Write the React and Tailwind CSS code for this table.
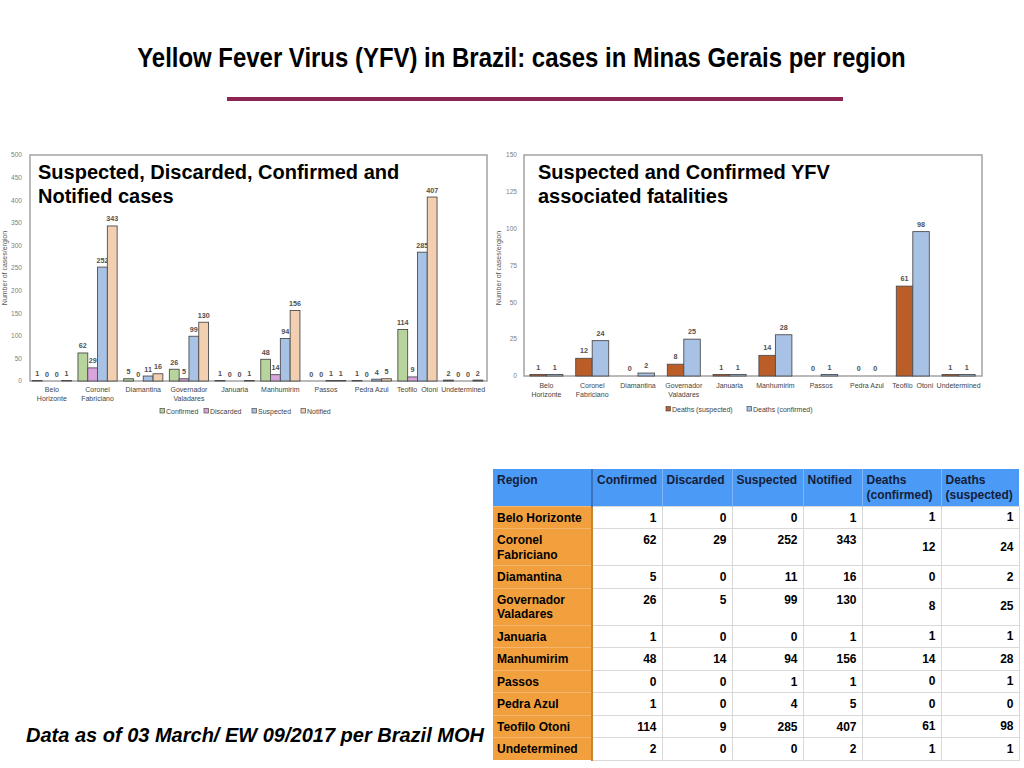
import React from "react";

const FONT = { fontFamily: '"Liberation Sans", Arial, Helvetica, sans-serif' };

const leftGroups = [
  { label: ["Belo", "Horizonte"], v: [1, 0, 0, 1] },
  { label: ["Coronel", "Fabriciano"], v: [62, 29, 252, 343] },
  { label: ["Diamantina"], v: [5, 0, 11, 16] },
  { label: ["Governador", "Valadares"], v: [26, 5, 99, 130] },
  { label: ["Januaria"], v: [1, 0, 0, 1] },
  { label: ["Manhumirim"], v: [48, 14, 94, 156] },
  { label: ["Passos"], v: [0, 0, 1, 1] },
  { label: ["Pedra Azul"], v: [1, 0, 4, 5] },
  { label: ["Teofilo  Otoni"], v: [114, 9, 285, 407] },
  { label: ["Undetermined"], v: [2, 0, 0, 2] },
];

const rightGroups = [
  { label: ["Belo", "Horizonte"], v: [1, 1] },
  { label: ["Coronel", "Fabriciano"], v: [12, 24] },
  { label: ["Diamantina"], v: [0, 2] },
  { label: ["Governador", "Valadares"], v: [8, 25] },
  { label: ["Januaria"], v: [1, 1] },
  { label: ["Manhumirim"], v: [14, 28] },
  { label: ["Passos"], v: [0, 1] },
  { label: ["Pedra Azul"], v: [0, 0] },
  { label: ["Teofilo  Otoni"], v: [61, 98] },
  { label: ["Undetermined"], v: [1, 1] },
];

const LCOL = ["#b6d49c", "#d9a3dc", "#a8c2e6", "#f3cfb1"];
const RCOL = ["#bb5d27", "#a8c2e6"];

function LeftChart() {
  const x0 = 30, y0 = 155, w = 457, h = 226;
  const base = y0 + h;
  const sc = h / 500;
  const gw = w / 10;
  const bw = 9.8;
  return (
    <svg width="495" height="275" viewBox="0 148 495 275" style={FONT}>
      {[0, 50, 100, 150, 200, 250, 300, 350, 400, 450, 500].map((t) => (
        <text key={t} x="22" y={base - t * sc + 2.3} fontSize="6.6" fill="#808080" textAnchor="end">
          {t}
        </text>
      ))}
      <text x="7" y="268" fontSize="7" fill="#555" textAnchor="middle" transform="rotate(-90 7 268)">
        Number of cases/ergion
      </text>
      <rect x={x0} y={y0} width={w} height={h} fill="white" stroke="#a3a3a3" strokeWidth="1.5" />
      {leftGroups.map((g, i) => {
        const cx = x0 - 1 + gw * (i + 0.5);
        const start = cx - bw * 2;
        return (
          <g key={i}>
            {g.v.map((v, j) => {
              const bh = v * sc;
              const bx = start + j * bw;
              return (
                <g key={j}>
                  {v > 0 && (
                    <rect x={bx} y={base - bh} width={bw} height={bh} fill={LCOL[j]} stroke="#4d4d4d" strokeWidth="0.9" />
                  )}
                  <text x={bx + bw / 2} y={base - bh - 4.5} fontSize="7.2" fontWeight="bold" fill="#505050" textAnchor="middle">
                    {v}
                  </text>
                </g>
              );
            })}
            {g.label.map((l, k) => (
              <text key={k} x={cx} y={392 + k * 8.5} fontSize="7" fill="#444" textAnchor="middle" xmlSpace="preserve">
                {l}
              </text>
            ))}
          </g>
        );
      })}
      {[
        ["Confirmed", 160],
        ["Discarded", 204],
        ["Suspected", 252],
        ["Notified", 301],
      ].map(([n, x], j) => (
        <g key={n}>
          <rect x={x} y={408.5} width="4.5" height="4.5" fill={LCOL[j]} stroke="#4d4d4d" strokeWidth="0.7" />
          <text x={x + 6} y={413.5} fontSize="7" fill="#444">
            {n}
          </text>
        </g>
      ))}
    </svg>
  );
}

function RightChart() {
  const x0 = 524, y0 = 155, w = 458, h = 221;
  const base = y0 + h;
  const sc = h / 150;
  const gw = w / 10;
  const bw = 16.5;
  return (
    <svg width="529" height="275" viewBox="495 148 529 275" style={FONT}>
      {[0, 25, 50, 75, 100, 125, 150].map((t) => (
        <text key={t} x="517" y={base - t * sc + 2.3} fontSize="6.6" fill="#808080" textAnchor="end">
          {t}
        </text>
      ))}
      <text x="501" y="268" fontSize="7" fill="#555" textAnchor="middle" transform="rotate(-90 501 268)">
        Number of cases/ergion
      </text>
      <rect x={x0} y={y0} width={w} height={h} fill="white" stroke="#a3a3a3" strokeWidth="1.5" />
      {rightGroups.map((g, i) => {
        const cx = x0 - 0.5 + gw * (i + 0.5);
        const start = cx - bw;
        return (
          <g key={i}>
            {g.v.map((v, j) => {
              const bh = v * sc;
              const bx = start + j * bw;
              return (
                <g key={j}>
                  {v > 0 && (
                    <rect x={bx} y={base - bh} width={bw} height={bh} fill={RCOL[j]} stroke="#4d4d4d" strokeWidth="0.9" />
                  )}
                  <text x={bx + bw / 2} y={base - bh - 5} fontSize="7.2" fontWeight="bold" fill="#505050" textAnchor="middle">
                    {v}
                  </text>
                </g>
              );
            })}
            {g.label.map((l, k) => (
              <text key={k} x={cx} y={388 + k * 8.5} fontSize="7" fill="#444" textAnchor="middle" xmlSpace="preserve">
                {l}
              </text>
            ))}
          </g>
        );
      })}
      {[
        ["Deaths (suspected)", 666],
        ["Deaths (confirmed)", 747],
      ].map(([n, x], j) => (
        <g key={n}>
          <rect x={x} y={406.5} width="4.5" height="4.5" fill={RCOL[j]} stroke="#4d4d4d" strokeWidth="0.7" />
          <text x={x + 6} y={411.5} fontSize="7" fill="#444">
            {n}
          </text>
        </g>
      ))}
    </svg>
  );
}

const rows = [
  ["Belo Horizonte", [1, 0, 0, 1, 1, 1], false],
  ["Coronel Fabriciano", [62, 29, 252, 343, 12, 24], true],
  ["Diamantina", [5, 0, 11, 16, 0, 2], false],
  ["Governador Valadares", [26, 5, 99, 130, 8, 25], true],
  ["Januaria", [1, 0, 0, 1, 1, 1], false],
  ["Manhumirim", [48, 14, 94, 156, 14, 28], false],
  ["Passos", [0, 0, 1, 1, 0, 1], false],
  ["Pedra Azul", [1, 0, 4, 5, 0, 0], false],
  ["Teofilo Otoni", [114, 9, 285, 407, 61, 98], false],
  ["Undetermined", [2, 0, 0, 2, 1, 1], false],
];

const headers = ["Confirmed", "Discarded", "Suspected", "Notified", "Deaths (confirmed)", "Deaths (suspected)"];

function DataTable() {
  return (
    <table className="table-fixed border-collapse w-[526px] text-[12px] leading-[14.5px] font-bold text-black" style={FONT}>
      <colgroup>
        <col className="w-[99px]" />
        <col className="w-[70px]" />
        <col className="w-[70px]" />
        <col className="w-[71px]" />
        <col className="w-[59px]" />
        <col className="w-[79px]" />
        <col className="w-[78px]" />
      </colgroup>
      <thead>
        <tr className="h-[37px] bg-[#4b9af6] text-[#14203a]">
          <th className="text-left align-top pt-[4px] pl-[4px] font-bold border-r-2 border-r-[#3a74bf]">Region</th>
          {headers.map((h) => (
            <th key={h} className="text-left align-top pt-[4px] pl-[4px] pr-[2px] font-bold border-l border-[#7db5f7]">
              {h}
            </th>
          ))}
        </tr>
      </thead>
      <tbody>
        {rows.map(([name, vals, dbl]) => (
          <tr key={name} className={dbl ? "h-[37px]" : "h-[22.5px]"}>
            <td className="bg-[#f2a03e] align-top pt-[4px] pl-[4px] pr-[2px] border-t border-[#f5b56a] border-r-2 border-r-[#c98431]">
              {name}
            </td>
            {vals.map((v, k) => (
              <td
                key={k}
                className={`text-right pr-[5px] border border-[#d9d9d9] ${k >= 4 ? "align-middle" : "align-top pt-[4px]"}`}
              >
                {v}
              </td>
            ))}
          </tr>
        ))}
      </tbody>
    </table>
  );
}

export default function App() {
  return (
    <div className="w-[1024px] h-[768px] bg-white overflow-hidden flex flex-col" style={FONT}>
      <div className="pt-[42px] pl-[18px] flex justify-center">
        <h1 className="text-[28px] leading-[32px] font-bold text-black scale-x-[0.855] whitespace-nowrap">
          Yellow Fever Virus (YFV) in Brazil: cases in Minas Gerais per region
        </h1>
      </div>
      <div className="mt-[23px] ml-[227px] w-[616px] h-[4px] bg-[#8c2454]" />
      <div className="mt-[47px] flex">
        <div className="relative w-[495px] h-[275px]">
          <LeftChart />
          <div className="absolute left-[38px] top-[12px] text-[20px] leading-[24px] font-bold text-black">
            Suspected, Discarded, Confirmed and
            <br />
            Notified cases
          </div>
        </div>
        <div className="relative w-[529px] h-[275px]">
          <RightChart />
          <div className="absolute left-[43px] top-[12px] text-[20px] leading-[24px] font-bold text-black">
            Suspected and Confirmed YFV
            <br />
            associated fatalities
          </div>
        </div>
      </div>
      <div className="mt-[46px] flex">
        <div className="w-[493px] flex flex-col justify-end pl-[26px] pb-[14px]">
          <p className="text-[20px] leading-[24px] font-bold italic text-black">
            Data as of 03 March/ EW 09/2017 per Brazil MOH
          </p>
        </div>
        <DataTable />
      </div>
    </div>
  );
}
